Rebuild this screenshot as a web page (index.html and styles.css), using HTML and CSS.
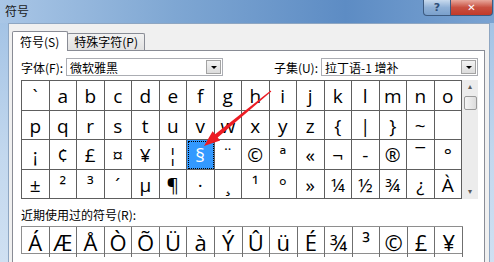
FILE: index.html
```html
<!DOCTYPE html>
<html lang="zh-CN">

<head>
    <meta charset="UTF-8">
    <title>符号</title>
    <link rel="stylesheet" href="styles.css">
</head>

<body>

    <div class="window">
        <div class="titlebar">
            <span class="titlebar__text">符号</span>
            <div class="titlebar__buttons">
                <span class="tb-btn tb-btn--help">?</span>
                <span class="tb-btn tb-btn--close">✕</span>
            </div>
        </div>
        <!--/titlebar-->

        <div class="client">
            <div class="tabs">
                <span class="tab tab--active">符号(<u>S</u>)</span>
                <span class="tab">特殊字符(<u>P</u>)</span>
            </div>

            <div class="page">
                <div class="font-row">
                    <div class="field">
                        <label>字体(<u>F</u>):</label>
                        <div class="combo combo--font">
                            <span>微软雅黑</span>
                            <i class="combo__btn"></i>
                        </div>
                    </div>
                    <div class="field">
                        <label>子集(<u>U</u>):</label>
                        <div class="combo combo--subset">
                            <span>拉丁语-1 增补</span>
                            <i class="combo__btn"></i>
                        </div>
                    </div>
                </div>
                <!--/font-row-->

                <div class="chart">
                    <div class="grid" id="grid"></div>
                    <div class="scroll">
                        <span class="scroll__arrow">&#9652;</span>
                        <span class="scroll__thumb"></span>
                        <span class="scroll__arrow scroll__arrow--down">&#9662;</span>
                    </div>
                </div>

                <div class="recent-label">近期使用过的符号(<u>R</u>):</div>
                <div class="recent" id="recent"></div>
            </div>
            <!--/page-->
        </div>

        <svg class="arrow" width="494" height="262" viewBox="0 0 494 262">
            <polygon fill="#ec1c24"
                points="270.7,90.6 215.1,134.3 212.6,131.3 204,146 220.2,140.5 217.7,137.4 271.3,91.4" />
        </svg>
    </div>

    <script>
        const symbols = [
            '`', 'a', 'b', 'c', 'd', 'e', 'f', 'g', 'h', 'i', 'j', 'k', 'l', 'm', 'n', 'o',
            'p', 'q', 'r', 's', 't', 'u', 'v', 'w', 'x', 'y', 'z', '{', '|', '}', '~', '',
            '¡', '¢', '£', '¤', '¥', '¦', '§', '¨', '©', 'ª', '«', '¬', '-', '®', '¯', '°',
            '±', '²', '³', '´', 'µ', '¶', '·', '¸', '¹', 'º', '»', '¼', '½', '¾', '¿', 'À'
        ]
        const recent = ['Á', 'Æ', 'Å', 'Ò', 'Õ', 'Ü', 'à', 'Ý', 'Û', 'ü', 'É', '¾', '³', '©', '£', '¥']

        const grid = document.getElementById('grid')
        symbols.forEach(function (ch) {
            let cell = document.createElement('span')
            cell.className = 'cell'
            if (ch === '§') cell.classList.add('cell--selected')
            cell.textContent = ch
            grid.appendChild(cell)
        })

        const recentRow = document.getElementById('recent')
        recent.forEach(function (ch) {
            let cell = document.createElement('span')
            cell.className = 'recent__cell'
            cell.textContent = ch
            recentRow.appendChild(cell)
        })
    </script>
</body>

</html>
```

FILE: styles.css
```css
html,
body {
    margin: 0;
    padding: 0;
}

body {
    width: 494px;
    height: 262px;
    overflow: hidden;
    font-family: "Noto Sans CJK SC", "Noto Sans", sans-serif;
    font-size: 12px;
    color: #000;
}

.window {
    position: relative;
    width: 494px;
    height: 262px;
    display: flex;
    flex-direction: column;
    background: linear-gradient(to bottom, #9fc0e4, #c3d8ee 60%, #cfe0f2);
}

.titlebar {
    height: 23px;
    display: flex;
    justify-content: space-between;
    align-items: flex-start;
    background: linear-gradient(to right, #a9c6e6 0%, #7fa7d3 35%, #5d8cc4 70%, #7aa3d2 100%);
}

.titlebar__text {
    padding: 4px 0 0 5px;
    font-size: 12px;
    line-height: 14px;
    color: #1b1b1b;
}

.titlebar__buttons {
    display: flex;
    margin-right: 1px;
}

.tb-btn {
    height: 15px;
    display: flex;
    align-items: center;
    justify-content: center;
    border: 1px solid #3c5a80;
    border-top: 0;
    font-family: "DejaVu Sans", sans-serif;
    font-weight: bold;
    color: #fff;
}

.tb-btn--help {
    width: 26px;
    font-size: 11px;
    border-radius: 0 0 0 4px;
    background: linear-gradient(to bottom, #c8daee, #8fb0d6 50%, #7aa0cc);
    color: #2e4e78;
}

.tb-btn--close {
    width: 41px;
    font-size: 10px;
    border-left: 0;
    border-radius: 0 0 4px 0;
    background: linear-gradient(to bottom, #e8a89c, #c85040 50%, #c23a2a);
}

.client {
    flex: 1;
    margin: 0 4px 0 8px;
    padding: 8px 4px 0 3px;
    background: #f0f0f0;
    border: 1px solid #8ea6c2;
    border-bottom: 0;
    display: flex;
    flex-direction: column;
}

.tabs {
    display: flex;
    align-items: flex-end;
    height: 18px;
    position: relative;
    z-index: 1;
}

.tab {
    height: 16px;
    padding: 0 6px;
    line-height: 16px;
    border: 1px solid #898c95;
    border-bottom: 0;
    background: linear-gradient(to bottom, #f2f2f2, #e1e1e1);
    margin-left: -1px;
    border-radius: 2px 2px 0 0;
}

.tab--active {
    height: 19px;
    padding: 0 8px 0 7px;
    line-height: 19px;
    margin-left: 0;
    margin-right: 0;
    background: #fff;
    position: relative;
    top: 1px;
}

.tab u,
.field u,
.recent-label u {
    text-decoration: none;
}

.page {
    flex: 1;
    background: #fff;
    border: 1px solid #898c95;
    border-bottom: 0;
    padding: 7px 6px 0 8px;
}

.font-row {
    display: flex;
    justify-content: space-between;
    height: 18px;
}

.field {
    display: flex;
    align-items: center;
    gap: 3px;
}

.combo {
    height: 16px;
    display: flex;
    align-items: center;
    justify-content: space-between;
    border: 1px solid #abadb3;
    padding-left: 3px;
}

.combo--font,
.combo--subset {
    width: 152px;
}

.combo__btn {
    width: 13px;
    height: 12px;
    margin-right: 1px;
    border: 1px solid #a3a3a3;
    background: linear-gradient(to bottom, #f3f3f3, #dcdcdc);
    display: flex;
    align-items: center;
    justify-content: center;
}

.combo__btn::after {
    content: "";
    border-left: 3px solid transparent;
    border-right: 3px solid transparent;
    border-top: 3px solid #000;
}

.chart {
    display: flex;
    margin-top: 4px;
    height: 119px;
}

.grid {
    width: 442px;
    display: grid;
    grid-template-columns: repeat(16, 1fr);
    grid-template-rows: repeat(4, 1fr);
    border-top: 1px solid #5e5e5e;
    border-left: 1px solid #5e5e5e;
    box-sizing: border-box;
}

.cell,
.recent__cell {
    display: flex;
    align-items: center;
    justify-content: center;
    font-family: "Open Sans", "Noto Sans", sans-serif;
    color: #000;
    border-right: 1px solid #5e5e5e;
    border-bottom: 1px solid #5e5e5e;
}

.cell {
    font-size: 19px;
    padding-top: 2px;
}

.cell--selected {
    background: #3399ff;
    color: #fff;
    outline: 1px dotted #000;
    outline-offset: -2px;
}

.scroll {
    width: 16px;
    background: #ececec;
    display: flex;
    flex-direction: column;
    align-items: center;
    justify-content: flex-start;
}

.scroll__arrow {
    height: 14px;
    font-size: 8px;
    line-height: 14px;
    color: #5b5b5b;
    font-family: "DejaVu Sans", sans-serif;
}

.scroll__arrow--down {
    margin-top: auto;
}

.scroll__thumb {
    width: 13px;
    height: 14px;
    margin-top: 2px;
    border: 1px solid #9a9a9a;
    border-radius: 2px;
    box-sizing: border-box;
    background: linear-gradient(to right, #f5f5f5, #dcdcdc);
}

.recent-label {
    margin-top: 8px;
    line-height: 16px;
}

.recent {
    margin-top: 3px;
    width: 442px;
    height: 28px;
    display: grid;
    grid-template-columns: repeat(16, 1fr);
    border: 1px solid #8e8e8e;
    border-right: 0;
    box-sizing: border-box;
}

.recent__cell {
    font-size: 22px;
    border-bottom: 0;
    border-color: #6f6f6f;
}

.arrow {
    position: absolute;
    left: 0;
    top: 0;
    pointer-events: none;
}
```
